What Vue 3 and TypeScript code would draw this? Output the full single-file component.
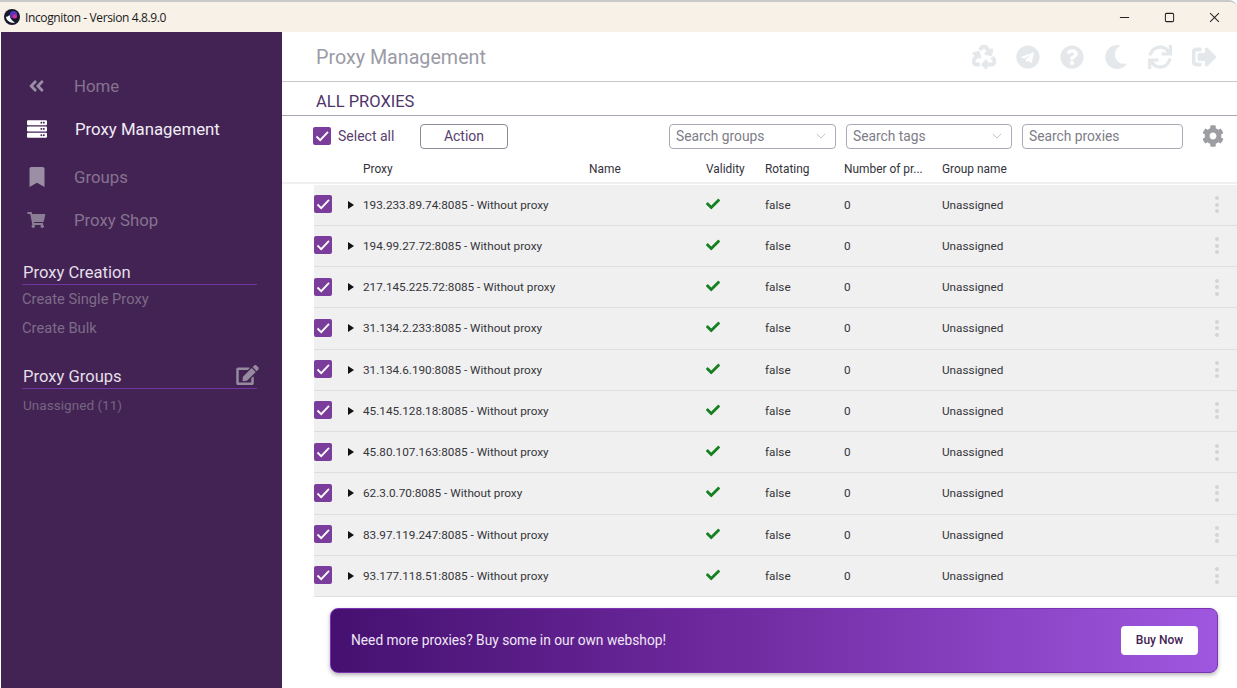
<script setup lang="ts">
const proxies: string[] = [
  '193.233.89.74', '194.99.27.72', '217.145.225.72', '31.134.2.233', '31.134.6.190',
  '45.145.128.18', '45.80.107.163', '62.3.0.70', '83.97.119.247', '93.177.118.51',
]
const check = 'M173.898 439.404l-166.4-166.4c-9.997-9.997-9.997-26.206 0-36.204l36.203-36.204c9.997-9.998 26.207-9.998 36.204 0L192 312.69 432.095 72.596c9.997-9.997 26.207-9.997 36.204 0l36.203 36.204c9.997 9.997 9.997 26.206 0 36.204l-294.4 294.401c-9.998 9.997-26.207 9.997-36.204-.001z'
const topIcons: { box: string; d: string; cls?: string }[] = [
  { box: '0 0 512 512', cls: 'bold', d: 'M184.561 261.903c3.232 13.997-12.123 24.635-24.068 17.168l-40.736-25.455-50.867 81.402C55.606 356.273 70.96 384 96.012 384H148c6.627 0 12 5.373 12 12v40c0 6.627-5.373 12-12 12H96.115c-75.334 0-121.302-83.048-81.408-146.88l50.822-81.388-40.725-25.448c-12.081-7.547-8.966-25.961 4.879-29.158l110.237-25.45c8.611-1.988 17.201 3.381 19.189 11.99l25.452 110.237zm98.561-182.915l41.289 66.076-40.74 25.457c-12.051 7.528-9 25.953 4.879 29.158l110.237 25.45c8.672 1.999 17.215-3.438 19.189-11.99l25.45-110.237c3.197-13.844-11.99-24.719-24.068-17.168l-40.687 25.424-41.263-66.082c-37.521-60.033-125.209-60.171-162.816 0l-17.963 28.766c-3.51 5.62-1.8 13.021 3.82 16.533l33.919 21.195c5.62 3.512 13.024 1.803 16.536-3.817l17.961-28.743c12.712-20.341 41.973-19.676 54.257-.022zM497.288 301.12l-27.515-44.065c-3.511-5.623-10.916-7.334-16.538-3.821l-33.861 21.159c-5.62 3.512-7.33 10.915-3.818 16.536l27.564 44.112c13.257 21.211-2.057 48.96-27.136 48.96H320V336.02c0-14.213-17.242-21.383-27.313-11.313l-80 79.981c-6.249 6.248-6.249 16.379 0 22.627l80 79.989C302.689 517.308 320 510.3 320 495.989V448h95.88c75.274 0 121.335-82.997 81.408-146.88z' },
  { box: '0 0 496 512', d: 'M248 8C111 8 0 119 0 256s111 248 248 248 248-111 248-248S385 8 248 8zm121.8 169.9l-40.7 191.8c-3 13.6-11.1 16.9-22.4 10.5l-62-45.7-29.9 28.8c-3.3 3.3-6.1 6.1-12.5 6.1l4.4-63.1 114.9-103.8c5-4.4-1.1-6.9-7.7-2.5l-142 89.4-61.2-19.1c-13.3-4.2-13.6-13.3 2.8-19.7l239.1-92.2c11.1-4 20.8 2.7 17.2 19.5z' },
  { box: '0 0 512 512', d: 'M504 256c0 136.997-111.043 248-248 248S8 392.997 8 256C8 119.083 119.043 8 256 8s248 111.083 248 248zM262.655 90c-54.497 0-89.255 22.957-116.549 63.758-3.536 5.286-2.353 12.415 2.715 16.258l34.699 26.31c5.205 3.947 12.621 3.008 16.665-2.122 17.864-22.658 30.113-35.797 57.303-35.797 20.429 0 45.698 13.148 45.698 32.958 0 14.976-12.363 22.667-32.534 33.976C247.128 238.528 216 254.941 216 296v4c0 6.627 5.373 12 12 12h56c6.627 0 12-5.373 12-12v-1.333c0-28.462 83.186-29.647 83.186-106.667 0-58.002-60.165-102-116.531-102zM256 338c-25.365 0-46 20.635-46 46 0 25.364 20.635 46 46 46s46-20.636 46-46c0-25.365-20.635-46-46-46z' },
  { box: '0 0 512 512', d: 'M283.211 512c78.962 0 151.079-35.925 198.857-94.792 7.068-8.708-.639-21.43-11.562-19.35-124.203 23.654-238.262-71.576-238.262-196.954 0-72.222 38.662-138.635 101.498-174.394 9.686-5.512 7.25-20.197-3.756-22.23A258.156 258.156 0 0 0 283.211 0c-141.309 0-256 114.511-256 256 0 141.309 114.511 256 256 256z' },
  { box: '0 0 512 512', d: 'M440.65 12.57l4 82.77A247.16 247.16 0 0 0 255.83 8C134.73 8 33.91 94.92 12.29 209.82A12 12 0 0 0 24.09 224h49.05a12 12 0 0 0 11.67-9.26 175.91 175.91 0 0 1 317-56.94l-101.46-4.86a12 12 0 0 0-12.57 12v47.41a12 12 0 0 0 12 12H500a12 12 0 0 0 12-12V12a12 12 0 0 0-12-12h-47.37a12 12 0 0 0-11.98 12.57zM255.83 432a175.61 175.61 0 0 1-146-77.8l101.8 4.87a12 12 0 0 0 12.57-12v-47.4a12 12 0 0 0-12-12H12a12 12 0 0 0-12 12V500a12 12 0 0 0 12 12h47.35a12 12 0 0 0 12-12.6l-4.15-82.57A247.17 247.17 0 0 0 255.83 504c121.11 0 221.93-86.92 243.55-201.82a12 12 0 0 0-11.8-14.18h-49.05a12 12 0 0 0-11.67 9.26A175.86 175.86 0 0 1 255.83 432z' },
  { box: '0 0 512 512', cls: 'bold', d: 'M497 273L329 441c-15 15-41 4.5-41-17v-96H152c-13.3 0-24-10.7-24-24v-96c0-13.3 10.7-24 24-24h136V88c0-21.4 25.9-32 41-17l168 168c9.3 9.4 9.3 24.6 0 34zM192 436v-40c0-6.6-5.4-12-12-12H96c-17.7 0-32-14.3-32-32V160c0-17.7 14.3-32 32-32h84c6.6 0 12-5.4 12-12V76c0-6.6-5.4-12-12-12H96c-53 0-96 43-96 96v192c0 53 43 96 96 96h84c6.6 0 12-5.4 12-12z' },
]
</script>

<template>
  <div class="window">
    <header class="titlebar">
      <svg class="logo" viewBox="0 0 16 16">
        <circle cx="8" cy="8" r="8" fill="#15182a" />
        <path d="M1.800 7.800C2.600 12 6.500 14.600 11 13.600 7.600 11.800 6 9 5.600 6 4.200 7.300 3 7.800 1.800 7.800z" fill="#f6f6f6" />
        <circle cx="9.500" cy="5.800" r="3.700" fill="#5536b8" />
        <circle cx="10.900" cy="7.400" r="2.100" fill="#d62e8c" />
      </svg>
      <span class="app-name">Incogniton - Version 4.8.9.0</span>
      <div class="win-controls">
        <svg viewBox="0 0 12 12"><path d="M1 6h10" /></svg>
        <svg viewBox="0 0 12 12"><rect x="1.500" y="1.500" width="9" height="9" rx="1.200" /></svg>
        <svg viewBox="0 0 12 12"><path d="M1.200 1.200l9.600 9.600M10.800 1.200l-9.600 9.600" /></svg>
      </div>
    </header>

    <div class="body">
      <aside class="sidebar">
        <nav class="nav">
          <a class="nav-item first">
            <span class="nav-icon"><svg class="i-home" viewBox="0 0 448 512"><path d="M223.7 239l136-136c9.4-9.4 24.6-9.4 33.9 0l22.6 22.6c9.4 9.4 9.4 24.6 0 33.9L319.9 256l96.4 96.4c9.4 9.4 9.4 24.6 0 33.9L393.7 409c-9.4 9.4-24.6 9.4-33.9 0l-136-136c-9.5-9.4-9.5-24.6-.1-34zm-192 34l136 136c9.4 9.4 24.6 9.4 33.9 0l22.6-22.6c9.4-9.4 9.4-24.6 0-33.9L127.9 256l96.4-96.4c9.4-9.4 9.4-24.6 0-33.9L201.7 103c-9.4-9.4-24.6-9.4-33.9 0l-136 136c-9.5 9.4-9.5 24.6-.1 34z" /></svg></span>
            Home
          </a>
          <a class="nav-item active">
            <span class="nav-icon"><svg class="i-server" viewBox="0 0 512 512"><path d="M480 160H32c-17.673 0-32-14.327-32-32V64c0-17.673 14.327-32 32-32h448c17.673 0 32 14.327 32 32v64c0 17.673-14.327 32-32 32zm-48-88c-13.255 0-24 10.745-24 24s10.745 24 24 24 24-10.745 24-24-10.745-24-24-24zm-64 0c-13.255 0-24 10.745-24 24s10.745 24 24 24 24-10.745 24-24-10.745-24-24-24zm112 248H32c-17.673 0-32-14.327-32-32v-64c0-17.673 14.327-32 32-32h448c17.673 0 32 14.327 32 32v64c0 17.673-14.327 32-32 32zm-48-88c-13.255 0-24 10.745-24 24s10.745 24 24 24 24-10.745 24-24-10.745-24-24-24zm-64 0c-13.255 0-24 10.745-24 24s10.745 24 24 24 24-10.745 24-24-10.745-24-24-24zm112 248H32c-17.673 0-32-14.327-32-32v-64c0-17.673 14.327-32 32-32h448c17.673 0 32 14.327 32 32v64c0 17.673-14.327 32-32 32zm-48-88c-13.255 0-24 10.745-24 24s10.745 24 24 24 24-10.745 24-24-10.745-24-24-24zm-64 0c-13.255 0-24 10.745-24 24s10.745 24 24 24 24-10.745 24-24-10.745-24-24-24z" /></svg></span>
            Proxy Management
          </a>
          <a class="nav-item gap">
            <span class="nav-icon"><svg class="i-book" viewBox="0 0 384 512"><path d="M0 512V48C0 21.490 21.490 0 48 0h288c26.510 0 48 21.490 48 48v464L192 400 0 512z" /></svg></span>
            Groups
          </a>
          <a class="nav-item">
            <span class="nav-icon"><svg class="i-cart" viewBox="0 0 576 512"><path d="M528.12 301.319l47.273-208C578.806 78.301 567.391 64 551.99 64H159.208l-9.166-44.81C147.758 8.021 137.93 0 126.529 0H24C10.745 0 0 10.745 0 24v16c0 13.255 10.745 24 24 24h69.883l70.248 343.435C147.325 417.1 136 435.222 136 456c0 30.928 25.072 56 56 56s56-25.072 56-56c0-15.674-6.447-29.835-16.824-40h209.647C430.447 426.165 424 440.326 424 456c0 30.928 25.072 56 56 56s56-25.072 56-56c0-22.172-12.888-41.332-31.579-50.405l5.517-24.276c3.413-15.018-8.002-29.319-23.403-29.319H218.117l-6.545-32h293.145c11.206 0 20.92-7.754 23.403-18.681z" /></svg></span>
            Proxy Shop
          </a>
        </nav>

        <section class="side-section creation">
          <h3 class="side-title">Proxy Creation</h3>
          <a class="side-link first-link">Create Single Proxy</a>
          <a class="side-link">Create Bulk</a>
        </section>

        <section class="side-section groups">
          <h3 class="side-title">
            Proxy Groups
            <svg class="i-edit" viewBox="0 0 576 512"><path d="M402.6 83.2l90.2 90.2c3.8 3.8 3.8 10 0 13.8L274.4 405.6l-92.8 10.3c-12.4 1.4-22.9-9.1-21.5-21.5l10.3-92.8L388.8 83.2c3.8-3.8 10-3.8 13.8 0zm162-22.9l-48.8-48.8c-15.2-15.2-39.9-15.2-55.2 0l-35.4 35.4c-3.8 3.8-3.8 10 0 13.8l90.2 90.2c3.8 3.8 10 3.8 13.8 0l35.4-35.4c15.2-15.3 15.2-40 0-55.2zM384 346.2V448H64V128h229.8c3.2 0 6.2-1.3 8.5-3.5l40-40c7.6-7.6 2.2-20.5-8.5-20.5H48C21.5 64 0 85.5 0 112v352c0 26.5 21.5 48 48 48h352c26.5 0 48-21.5 48-48V306.2c0-10.7-12.9-16-20.5-8.5l-40 40c-2.2 2.3-3.5 5.3-3.5 8.5z" /></svg>
          </h3>
          <a class="side-link dim">Unassigned (11)</a>
        </section>
      </aside>

      <main class="main">
        <div class="page-head">
          <h1 class="page-title">Proxy Management</h1>
          <div class="top-icons">
            <span v-for="(icon, n) in topIcons" :key="n" class="top-icon">
              <svg :class="icon.cls" :viewBox="icon.box"><path :d="icon.d" /></svg>
            </span>
          </div>
        </div>

        <div class="sub-head">ALL PROXIES</div>

        <div class="toolbar">
          <span class="cb"><svg viewBox="0 0 18 18"><path d="M3.500 9.500l3.700 3.700L15 4.800" /></svg></span>
          <span class="select-all">Select all</span>
          <button class="action" type="button">Action</button>
          <div class="filters">
            <div class="field sel groups-sel">Search groups<svg viewBox="0 0 10 6"><path d="M.8.8L5 5 9.200.8" /></svg></div>
            <div class="field sel tags-sel">Search tags<svg viewBox="0 0 10 6"><path d="M.8.8L5 5 9.200.8" /></svg></div>
            <div class="field search">Search proxies</div>
          </div>
          <svg class="gear" viewBox="0 0 512 512"><path d="M487.4 315.7l-42.6-24.6c4.3-23.2 4.3-47 0-70.2l42.6-24.6c4.9-2.8 7.1-8.6 5.5-14-11.1-35.6-30-67.8-54.7-94.6-3.8-4.1-10-5.1-14.8-2.3L380.8 110c-17.9-15.4-38.5-27.3-60.8-35.1V25.8c0-5.6-3.9-10.5-9.4-11.7-36.7-8.2-74.3-7.8-109.2 0-5.5 1.2-9.4 6.1-9.4 11.7V75c-22.2 7.9-42.8 19.8-60.8 35.1L88.7 85.5c-4.9-2.8-11-1.9-14.8 2.3-24.7 26.7-43.6 58.9-54.7 94.6-1.7 5.4.6 11.2 5.5 14L67.3 221c-4.3 23.2-4.3 47 0 70.2l-42.6 24.6c-4.9 2.8-7.1 8.6-5.5 14 11.1 35.6 30 67.8 54.7 94.6 3.8 4.1 10 5.1 14.8 2.3l42.6-24.6c17.9 15.4 38.5 27.3 60.8 35.1v49.2c0 5.6 3.9 10.5 9.4 11.7 36.7 8.2 74.3 7.8 109.2 0 5.5-1.2 9.4-6.1 9.4-11.7v-49.2c22.2-7.9 42.8-19.8 60.8-35.1l42.6 24.6c4.9 2.8 11 1.9 14.8-2.3 24.7-26.7 43.6-58.9 54.7-94.6 1.5-5.5-.7-11.3-5.6-14.1zM256 336c-44.1 0-80-35.9-80-80s35.9-80 80-80 80 35.9 80 80-35.9 80-80 80z" /></svg>
        </div>

        <div class="grid head-row">
          <span></span>
          <span>Proxy</span>
          <span>Name</span>
          <span>Validity</span>
          <span>Rotating</span>
          <span>Number of pr...</span>
          <span>Group name</span>
        </div>

        <div class="rows">
          <div v-for="ip in proxies" :key="ip" class="grid row">
            <span class="row-lead">
              <span class="cb small"><svg viewBox="0 0 18 18"><path d="M3.500 9.500l3.700 3.700L15 4.800" /></svg></span>
              <span class="caret"></span>
            </span>
            <span class="proxy-cell">{{ ip }}:8085 - Without proxy</span>
            <span></span>
            <span><svg class="valid" viewBox="0 0 512 512"><path :d="check" /></svg></span>
            <span>false</span>
            <span>0</span>
            <span>Unassigned</span>
            <span class="dots"><i></i><i></i><i></i></span>
          </div>
        </div>

        <div class="banner">
          <span>Need more proxies? Buy some in our own webshop!</span>
          <button class="buy" type="button">Buy Now</button>
        </div>
      </main>
    </div>
  </div>
</template>

<style>
html, body { margin: 0; background: #fff; }
</style>

<style scoped>
.window {
  width: 1237px;
  height: 688px;
  overflow: hidden;
  display: flex;
  flex-direction: column;
  box-sizing: border-box;
  font-family: Roboto, "Liberation Sans", sans-serif;
  background: #fff;
  border-top: 2px solid #c9c9cc;
  border-top-right-radius: 8px;
}
.titlebar {
  height: 30px;
  flex: none;
  display: flex;
  align-items: center;
  background: #f7f1e8;
  padding-left: 4px;
  box-sizing: border-box;
}
.logo { width: 16px; height: 16px; margin-right: 5px; }
.app-name { font: 12px "Open Sans", sans-serif; color: #1a1a1a; letter-spacing: -.38px; }
.win-controls { margin-left: auto; display: flex; gap: 34px; padding-right: 17px; }
.win-controls svg { width: 11px; height: 11px; fill: none; stroke: #222; stroke-width: 1.1; }
.body { flex: 1; display: flex; min-height: 0; }

.sidebar {
  width: 281px;
  margin-left: 1px;
  flex: none;
  background: #432354;
  box-sizing: border-box;
  padding-top: 32px;
  color: #8d7d97;
}
.nav { display: flex; flex-direction: column; }
.nav-item {
  height: 43px;
  display: flex;
  align-items: center;
  font-size: 16.8px;
  color: #85748f;
  padding-left: 26px;
}
.nav-item.gap { margin-top: 5px; }
.nav-item.active { color: #f1edf4; }
.nav-item.active .nav-icon svg { fill: #fff; }
.nav-icon { width: 47px; flex: none; display: flex; align-items: center; justify-content: flex-start; }
.nav-icon svg { fill: #9b8fa5; display: block; }
.i-home { width: 17px; height: 18px; margin-left: 1px; }
.i-server { width: 20px; height: 20px; }
.i-book { width: 16px; height: 20px; margin-left: 2px; }
.nav-icon .i-cart { width: 18.500px; height: 16px; fill: #8a7d94; }
.active .nav-icon { width: 48px; }

.side-section { margin: 0 25px 0 21px; }
.creation { margin-top: 19px; }
.groups { margin-top: 22px; }
.side-title {
  margin: 0;
  height: 25px;
  box-sizing: border-box;
  display: flex;
  align-items: center;
  justify-content: space-between;
  border-bottom: 1px solid #71379c;
  font-size: 16.600px;
  font-weight: 400;
  color: #e4dfe8;
  padding-left: 1px;
}
.i-edit { width: 23px; height: 20px; fill: #958a9e; margin-bottom: 3px; margin-right: -2px; }
.side-link { display: block; font-size: 14.700px; color: #7d6c88; height: 28px; line-height: 28px; }
.first-link { height: 29px; }
.side-link.dim { color: #766580; font-size: 13.600px; padding-left: 1px; margin-top: 2px; }

.main { flex: 1; min-width: 0; display: flex; flex-direction: column; }
.page-head {
  height: 50px;
  flex: none;
  box-sizing: border-box;
  display: flex;
  align-items: center;
  justify-content: space-between;
  border-bottom: 1px solid #c6c6cc;
  padding: 0 21px 0 34px;
}
.page-title { margin: 1px 0 0; font-size: 19.700px; font-weight: 400; color: #9a9ba6; }
.top-icons { display: flex; gap: 20px; }
.top-icon { width: 24px; height: 24px; display: flex; }
.top-icon svg { width: 24px; height: 24px; fill: #e5e8eb; }
.top-icon svg.bold { stroke: #e5e8eb; stroke-width: 22; }
.sub-head {
  height: 34px;
  flex: none;
  box-sizing: border-box;
  border-bottom: 1px solid #a9a7b1;
  padding: 10px 0 0 34px;
  font-size: 16.500px;
  line-height: 20px;
  color: #50346c;
}
.toolbar {
  height: 40px;
  flex: none;
  box-sizing: border-box;
  display: flex;
  align-items: center;
  padding-left: 31px;
}
.cb {
  width: 18px;
  height: 18px;
  flex: none;
  background: #7a3d9c;
  border-radius: 2px;
  display: block;
}
.cb svg { width: 18px; height: 18px; fill: none; stroke: #fff; stroke-width: 1.800; display: block; }
.select-all { margin-left: 7px; font-size: 14px; color: #59406f; width: 82px; }
.action {
  width: 88px;
  height: 25px;
  padding: 0;
  background: #fff;
  border: 1px solid #8c8a96;
  border-radius: 4px;
  font: 14px Roboto, sans-serif;
  color: #59406f;
}
.filters { margin-left: 161px; display: flex; gap: 10px; }
.field {
  height: 25px;
  box-sizing: border-box;
  border: 1px solid #aaa9b4;
  border-radius: 4px;
  font-size: 13.800px;
  line-height: 23px;
  color: #7d7d88;
  padding-left: 6px;
  display: flex;
  align-items: center;
  justify-content: space-between;
}
.sel svg { width: 10px; height: 6px; fill: none; stroke: #c5c5cb; stroke-width: 1; margin-right: 9px; }
.groups-sel { width: 167px; }
.tags-sel { width: 166px; }
.search { width: 161px; }
.gear { width: 22px; height: 22px; fill: #9d9ea3; margin-left: 19px; }

.grid {
  display: grid;
  grid-template-columns: 49px 226px 117px 59px 79px 98px 1fr 40px;
  align-items: center;
  margin-left: 32px;
  font-size: 11.750px;
  color: #33333b;
}
.grid.head-row {
  height: 26px;
  flex: none;
  border-bottom: 2px solid #f0f0f2;
  margin-left: 0;
  padding-left: 32px;
  margin-bottom: .5px;
  font-size: 11.900px;
}
.rows { display: flex; flex-direction: column; }
.row {
  height: 41.250px;
  box-sizing: border-box;
  background: #f0f0f0;
  border-bottom: 1.500px solid #dfdfe1;
  color: #35353b;
}
.row-lead { display: flex; align-items: center; }
.caret {
  width: 0;
  height: 0;
  margin-left: 16px;
  border-left: 6px solid #111;
  border-top: 4.500px solid transparent;
  border-bottom: 4.500px solid transparent;
}
.cb.small { margin-bottom: 1px; }
.proxy-cell { white-space: nowrap; }
.valid { width: 14px; height: 14px; fill: #15801f; display: block; margin-bottom: 2px; }
.dots { display: flex; flex-direction: column; align-items: center; gap: 2.500px; }
.dots i { width: 4px; height: 4px; border-radius: 50%; background: #d3d4d8; display: block; }

.banner {
  width: 888px;
  height: 65px;
  margin: 10.500px 0 0 48px;
  flex: none;
  box-sizing: border-box;
  border: 1px solid #7b32b4;
  border-radius: 8px;
  background: linear-gradient(90deg, #451070, #6f2a9f 45%, #9f57e0);
  box-shadow: 0 2px 4px rgba(0, 0, 0, .3);
  display: flex;
  align-items: center;
  justify-content: space-between;
  padding: 0 19px 0 20px;
  color: #efe6f7;
  font-size: 13.750px;
}
.buy {
  width: 77px;
  height: 29px;
  padding: 0;
  border: 0;
  border-radius: 4px;
  background: #fff;
  color: #432354;
  font: 500 12px Roboto, sans-serif;
}
</style>
